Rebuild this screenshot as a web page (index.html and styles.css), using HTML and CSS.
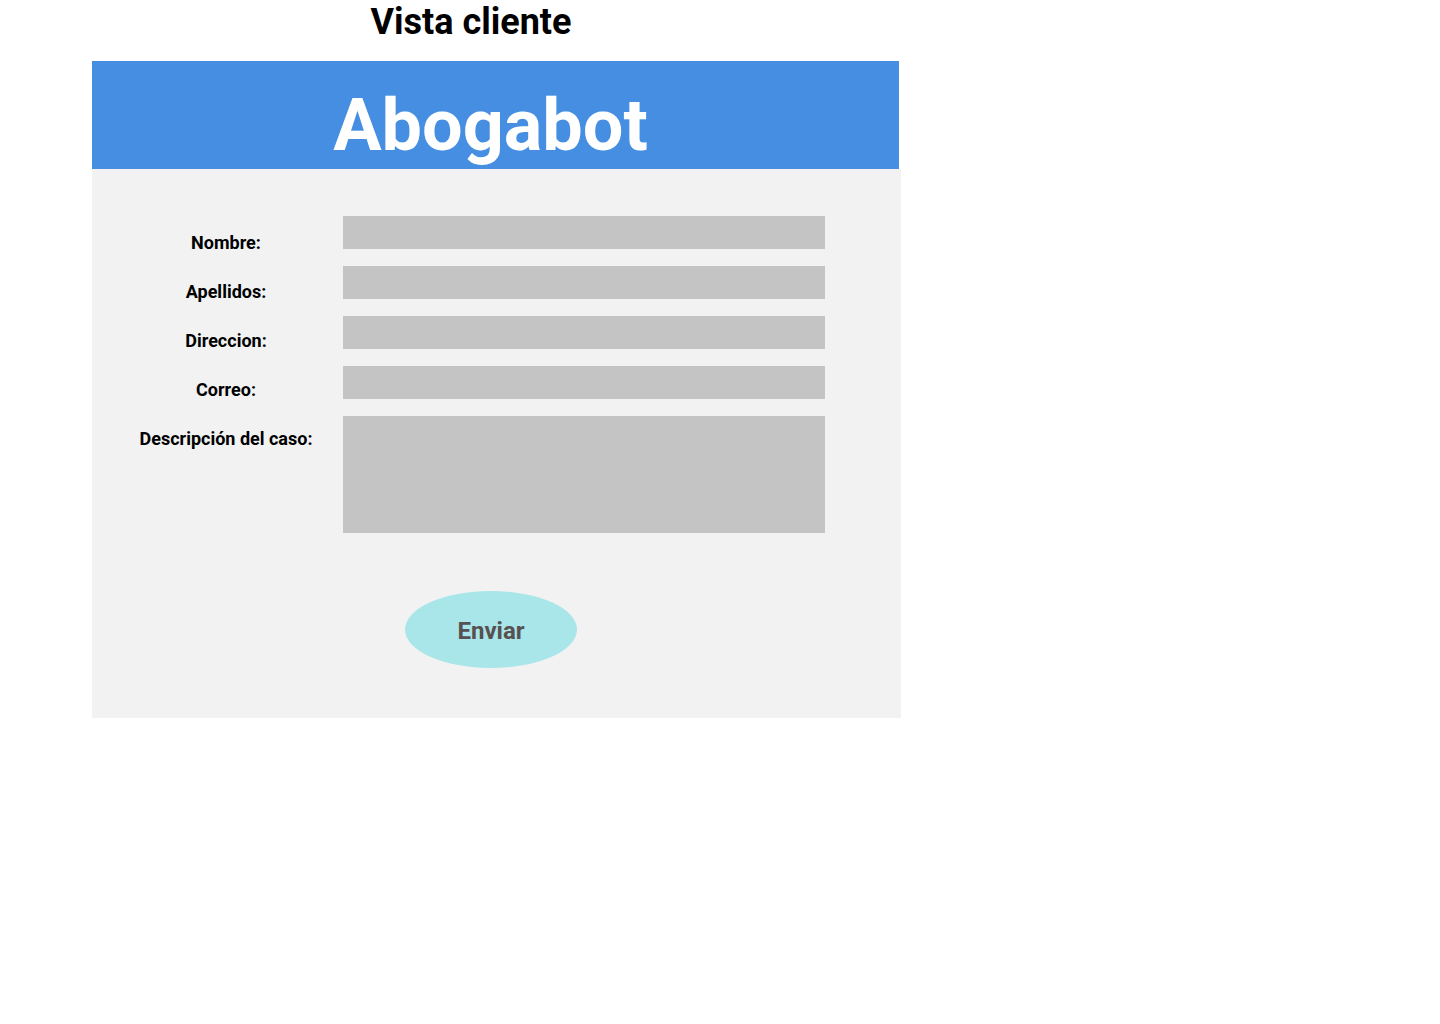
FILE: index.html
```html
<!DOCTYPE html>
<html lang="es">
<head>
<meta charset="utf-8">
<title>Vista cliente</title>
<link rel="stylesheet" href="styles.css">
</head>
<body>
<div class="page">
  <h1 class="view-title">Vista cliente</h1>
  <header class="app-header">
    <span class="brand">Abogabot</span>
  </header>
  <main class="panel">
    <form class="form">
      <div class="labels">
        <label class="label">Nombre:</label>
        <label class="label">Apellidos:</label>
        <label class="label">Direccion:</label>
        <label class="label">Correo:</label>
        <label class="label">Descripción del caso:</label>
      </div>
      <div class="fields">
        <div class="field"></div>
        <div class="field"></div>
        <div class="field"></div>
        <div class="field"></div>
        <div class="field field-area"></div>
      </div>
    </form>
    <div class="actions">
      <button type="button" class="send">Enviar</button>
    </div>
  </main>
</div>
</body>
</html>
```

FILE: styles.css
```css
* { box-sizing: border-box; }

html, body {
  margin: 0;
  padding: 0;
  background: #ffffff;
  font-family: Roboto, "Liberation Sans", Arial, sans-serif;
}

.page {
  margin-left: 92px;
  width: 809px;
}

.view-title {
  margin: 0 0 18px 0;
  padding: 1px 51px 0 0;
  height: 43px;
  font-size: 36px;
  line-height: 42px;
  font-weight: 700;
  color: #000;
  text-align: center;
}

.app-header {
  width: 807px;
  height: 108px;
  background: #458ee2;
  padding: 23px 10px 0 0;
  text-align: center;
  overflow: hidden;
}

.brand {
  display: inline-block;
  font-size: 72px;
  line-height: 84px;
  font-weight: 700;
  color: #ffffff;
}

.panel {
  background: #f2f2f2;
  padding: 47px 0 50px 0;
}

.form {
  display: flex;
  gap: 17px;
  padding-left: 34px;
}

.labels {
  width: 200px;
  display: flex;
  flex-direction: column;
  padding-top: 2px;
}

.label {
  display: block;
  text-align: center;
  font-size: 18px;
  line-height: 49px;
  font-weight: 700;
  color: #000;
}

.fields {
  width: 482px;
  display: flex;
  flex-direction: column;
  gap: 17px;
}

.field {
  height: 33px;
  background: #c4c4c4;
}

.field-area {
  height: 117px;
}

.actions {
  display: flex;
  padding-left: 313px;
  margin-top: 58px;
}

.send {
  width: 172px;
  height: 77px;
  border: none;
  border-radius: 50%;
  background: #a9e6e9;
  color: #575151;
  font-family: Roboto, "Liberation Sans", Arial, sans-serif;
  font-size: 24px;
  font-weight: 700;
  padding: 3px 0 0 0;
  margin: 0;
}
```
